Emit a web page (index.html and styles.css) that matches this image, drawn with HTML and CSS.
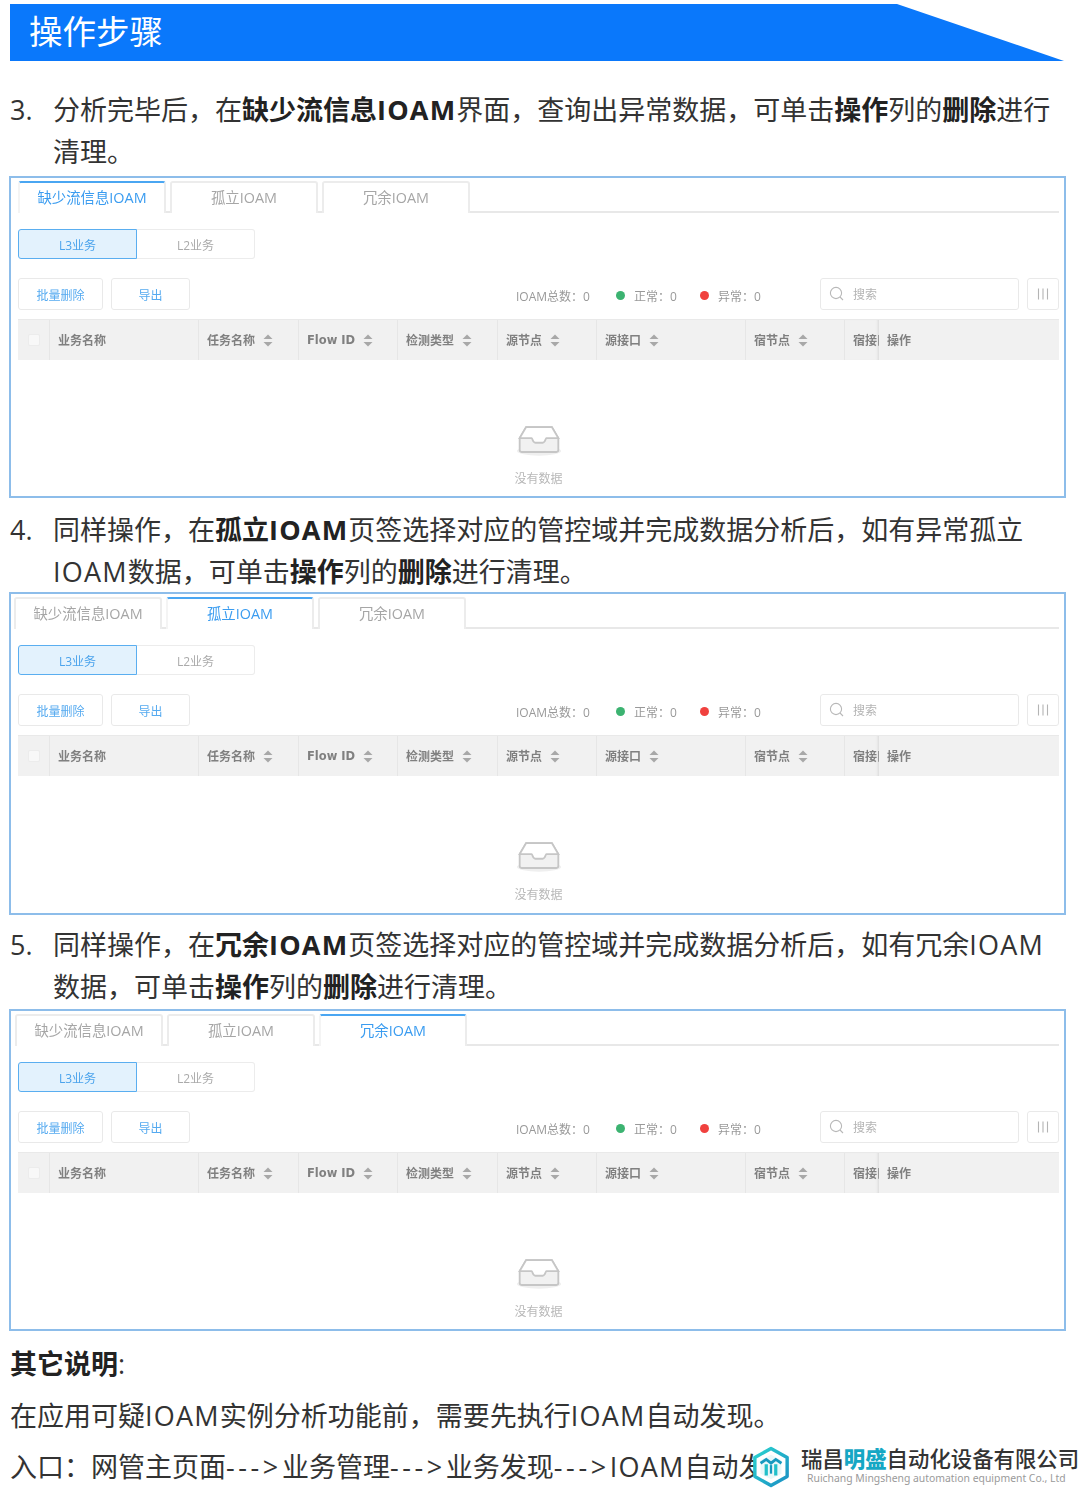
FILE: index.html
```html
<!DOCTYPE html>
<html lang="zh-CN">
<head>
<meta charset="utf-8">
<title>操作步骤</title>
<link rel="stylesheet" href="styles.css">
</head>
<body>
<svg class="defs" width="0" height="0" aria-hidden="true">
  <symbol id="sort" viewBox="0 0 10 13"><path d="M5 0.5 9.5 5H0.5Z" fill="#a8a8a8"/><path d="M5 12.5 0.5 8H9.5Z" fill="#a8a8a8"/></symbol>
  <symbol id="search" viewBox="0 0 16 16"><circle cx="7" cy="7" r="5.6" fill="none" stroke="#b8b8b8" stroke-width="1.1"/><path d="M11 11 14 14" stroke="#b8b8b8" stroke-width="1.1"/></symbol>
  <symbol id="cols" viewBox="0 0 12 12"><path d="M1.5 0.5V11.5M6 0.5V11.5M10.5 0.5V11.5" stroke="#b4b4b4" stroke-width="1.1"/></symbol>
  <symbol id="inbox" viewBox="0 0 50 34">
    <ellipse cx="25" cy="29" rx="24" ry="5" fill="#efefef"/>
    <path d="M4 15 11 3H39L46 15V28A2 2 0 0 1 44 30H6A2 2 0 0 1 4 28Z" fill="#f1f1f1" stroke="#c6c6c6" stroke-width="2"/>
    <path d="M11 3H39L46 15H33C32 15 32 20 29 20H21C18 20 18 15 17 15H4Z" fill="#fff" stroke="#c6c6c6" stroke-width="2"/>
  </symbol>
</svg>

<header class="banner"><h1 class="banner-title">操作步骤</h1></header>

<p class="step step-3"><span class="step-no">3.</span><span class="step-text">分析完毕后&#xFF0C;在<b>缺少流信息<span class="la">IOAM</span></b>界面&#xFF0C;查询出异常数据&#xFF0C;可单击<b>操作</b>列的<b>删除</b>进行<br>清理。</span></p>

<section class="panel panel-a">
  <div class="tabs">
    <div class="tab tab-on">缺少流信息IOAM</div><div class="tab">孤立IOAM</div><div class="tab">冗余IOAM</div>
  </div>
  <div class="seg"><div class="seg-item seg-on">L3业务</div><div class="seg-item">L2业务</div></div>
  <div class="tools">
    <div class="btn btn-wide">批量删除</div><div class="btn btn-narrow">导出</div>
    <div class="stats"><span class="stat-total">IOAM总数&#xFF1A;0</span><span class="stat"><i class="dot dot-ok"></i>正常&#xFF1A;0</span><span class="stat"><i class="dot dot-bad"></i>异常&#xFF1A;0</span></div>
    <div class="search"><svg class="ico-search"><use href="#search"/></svg>搜索</div>
    <div class="colbtn"><svg class="ico-cols"><use href="#cols"/></svg></div>
  </div>
  <div class="thead">
    <div class="th c0"><i class="check"></i></div>
    <div class="th c1">业务名称</div>
    <div class="th c2">任务名称<svg class="ico-sort"><use href="#sort"/></svg></div>
    <div class="th c3"><span class="flow">Flow ID</span><svg class="ico-sort"><use href="#sort"/></svg></div>
    <div class="th c4">检测类型<svg class="ico-sort"><use href="#sort"/></svg></div>
    <div class="th c5">源节点<svg class="ico-sort"><use href="#sort"/></svg></div>
    <div class="th c6">源接口<svg class="ico-sort"><use href="#sort"/></svg></div>
    <div class="th c7">宿节点<svg class="ico-sort"><use href="#sort"/></svg></div>
    <div class="th c8">宿接口</div>
    <div class="th c9">操作</div>
  </div>
  <div class="empty"><svg class="ico-inbox"><use href="#inbox"/></svg><div class="empty-text">没有数据</div></div>
</section>

<p class="step step-4"><span class="step-no">4.</span><span class="step-text">同样操作&#xFF0C;在<b>孤立<span class="la">IOAM</span></b>页签选择对应的管控域并完成数据分析后&#xFF0C;如有异常孤立<br><span class="la">IOAM</span>数据&#xFF0C;可单击<b>操作</b>列的<b>删除</b>进行清理。</span></p>

<section class="panel panel-b">
  <div class="tabs">
    <div class="tab">缺少流信息IOAM</div><div class="tab tab-on">孤立IOAM</div><div class="tab">冗余IOAM</div>
  </div>
  <div class="seg"><div class="seg-item seg-on">L3业务</div><div class="seg-item">L2业务</div></div>
  <div class="tools">
    <div class="btn btn-wide">批量删除</div><div class="btn btn-narrow">导出</div>
    <div class="stats"><span class="stat-total">IOAM总数&#xFF1A;0</span><span class="stat"><i class="dot dot-ok"></i>正常&#xFF1A;0</span><span class="stat"><i class="dot dot-bad"></i>异常&#xFF1A;0</span></div>
    <div class="search"><svg class="ico-search"><use href="#search"/></svg>搜索</div>
    <div class="colbtn"><svg class="ico-cols"><use href="#cols"/></svg></div>
  </div>
  <div class="thead">
    <div class="th c0"><i class="check"></i></div>
    <div class="th c1">业务名称</div>
    <div class="th c2">任务名称<svg class="ico-sort"><use href="#sort"/></svg></div>
    <div class="th c3"><span class="flow">Flow ID</span><svg class="ico-sort"><use href="#sort"/></svg></div>
    <div class="th c4">检测类型<svg class="ico-sort"><use href="#sort"/></svg></div>
    <div class="th c5">源节点<svg class="ico-sort"><use href="#sort"/></svg></div>
    <div class="th c6">源接口<svg class="ico-sort"><use href="#sort"/></svg></div>
    <div class="th c7">宿节点<svg class="ico-sort"><use href="#sort"/></svg></div>
    <div class="th c8">宿接口</div>
    <div class="th c9">操作</div>
  </div>
  <div class="empty"><svg class="ico-inbox"><use href="#inbox"/></svg><div class="empty-text">没有数据</div></div>
</section>

<p class="step step-5"><span class="step-no">5.</span><span class="step-text">同样操作&#xFF0C;在<b>冗余<span class="la">IOAM</span></b>页签选择对应的管控域并完成数据分析后&#xFF0C;如有冗余<span class="la">IOAM</span><br>数据&#xFF0C;可单击<b>操作</b>列的<b>删除</b>进行清理。</span></p>

<section class="panel panel-c">
  <div class="tabs">
    <div class="tab">缺少流信息IOAM</div><div class="tab">孤立IOAM</div><div class="tab tab-on">冗余IOAM</div>
  </div>
  <div class="seg"><div class="seg-item seg-on">L3业务</div><div class="seg-item">L2业务</div></div>
  <div class="tools">
    <div class="btn btn-wide">批量删除</div><div class="btn btn-narrow">导出</div>
    <div class="stats"><span class="stat-total">IOAM总数&#xFF1A;0</span><span class="stat"><i class="dot dot-ok"></i>正常&#xFF1A;0</span><span class="stat"><i class="dot dot-bad"></i>异常&#xFF1A;0</span></div>
    <div class="search"><svg class="ico-search"><use href="#search"/></svg>搜索</div>
    <div class="colbtn"><svg class="ico-cols"><use href="#cols"/></svg></div>
  </div>
  <div class="thead">
    <div class="th c0"><i class="check"></i></div>
    <div class="th c1">业务名称</div>
    <div class="th c2">任务名称<svg class="ico-sort"><use href="#sort"/></svg></div>
    <div class="th c3"><span class="flow">Flow ID</span><svg class="ico-sort"><use href="#sort"/></svg></div>
    <div class="th c4">检测类型<svg class="ico-sort"><use href="#sort"/></svg></div>
    <div class="th c5">源节点<svg class="ico-sort"><use href="#sort"/></svg></div>
    <div class="th c6">源接口<svg class="ico-sort"><use href="#sort"/></svg></div>
    <div class="th c7">宿节点<svg class="ico-sort"><use href="#sort"/></svg></div>
    <div class="th c8">宿接口</div>
    <div class="th c9">操作</div>
  </div>
  <div class="empty"><svg class="ico-inbox"><use href="#inbox"/></svg><div class="empty-text">没有数据</div></div>
</section>

<div class="notes">
  <p class="note"><b>其它说明</b>:</p>
  <p class="note">在应用可疑<span class="la">IOAM</span>实例分析功能前&#xFF0C;需要先执行<span class="la">IOAM</span>自动发现。</p>
  <p class="note note-clip">入口&#xFF1A;网管主页面<span class="arrow">---&gt;</span>业务管理<span class="arrow">---&gt;</span>业务发现<span class="arrow">---&gt;</span><span class="la">IOAM</span>自动发现</p>
</div>

<div class="logo">
  <svg class="logo-mark" viewBox="0 0 40 44" aria-hidden="true">
    <defs><linearGradient id="lg" x1="0" y1="0" x2="1" y2="1"><stop offset="0" stop-color="#2bd3cf"/><stop offset="1" stop-color="#1b8fc4"/></linearGradient></defs>
    <path d="M20 2.5 37 12V32L20 41.5 3 32V12Z" fill="#fff" stroke="url(#lg)" stroke-width="3.6" stroke-linejoin="round"/>
    <path d="M20 9 31 15V29L20 35 9 29V15Z" fill="#e9f8f9"/>
    <path d="M9 18 15 14 20 18 25 14 31 18" fill="none" stroke="#1799bf" stroke-width="3"/>
    <path d="M15 19V31M25 19V31" stroke="#22c0c9" stroke-width="3.4" fill="none"/>
    <path d="M20 20V29" stroke="#1799bf" stroke-width="2.4" fill="none"/>
  </svg>
  <div class="logo-text">
    <div class="logo-cn">瑞昌<span class="logo-hi">明盛</span>自动化设备有限公司</div>
    <div class="logo-en">Ruichang Mingsheng automation equipment Co., Ltd</div>
  </div>
</div>
</body>
</html>
```

FILE: styles.css
```css
* { box-sizing: border-box; }
html, body { margin: 0; padding: 0; }
body {
  position: relative;
  width: 1080px;
  height: 1489px;
  overflow: hidden;
  background: #fff;
  color: #333;
  font-family: "Open Sans", "Noto Sans CJK SC", sans-serif;
}
.defs { position: absolute; }
b { font-weight: 700; color: #222; }
.la { letter-spacing: 1.2px; }
.arrow { letter-spacing: 3.6px; }

.banner {
  margin: 4px 16px 0 10px;
  height: 57px;
  background: #0a78fb;
  clip-path: polygon(0 0, 887px 0, 100% 100%, 0 100%);
  padding-left: 19px;
}
.banner-title {
  margin: 0;
  font-size: 33.5px;
  font-weight: 400;
  line-height: 54px;
  color: #fff;
}

.step {
  display: flex;
  margin: 0;
  padding-left: 10px;
  font-size: 27px;
  line-height: 42px;
  white-space: nowrap;
  color: #333;
}
.step-no { width: 43px; flex: none; }
.step-3 { margin-top: 28px; margin-bottom: 3px; }
.step-4 { margin-top: 11px; margin-bottom: -1px; }
.step-5 { margin-top: 9px; margin-bottom: 1px; }

.panel {
  display: flex;
  flex-direction: column;
  margin-left: 9px;
  width: 1057px;
  height: 322px;
  border: 2px solid #8dbdea;
  padding: 3px 5px 0 7px;
  color: #aaa;
  font-size: 12px;
  overflow: hidden;
  filter: blur(0.35px);
}
.panel-b { height: 323px; }

.tabs {
  display: flex;
  gap: 4px;
  height: 32px;
  border-bottom: 2px solid #e8e8e8;
  flex: none;
}
.tab {
  width: 148px;
  height: 32px;
  border: 2px solid #ececec;
  border-radius: 3px 3px 0 0;
  border-bottom: 0;
  text-align: center;
  line-height: 30px;
  font-size: 14.4px;
  color: #a6a6a6;
  background: #fff;
}
.tab-on {
  border-top: 2px solid #4aa6f2;
  color: #3a9cf0;
  border-left-color: #f4f4f4;
}
.panel-b .tabs { margin-left: -4px; }
.panel-c .tabs { margin-left: -3px; }

.seg {
  display: flex;
  margin-top: 16px;
  width: 237px;
  height: 30px;
  flex: none;
}
.seg-item {
  flex: 1;
  text-align: center;
  line-height: 31px;
  border: 1px solid #ececec;
  border-left: 0;
  border-radius: 0 3px 3px 0;
  color: #aaa;
  font-size: 12px;
}
.seg-on {
  flex: none;
  width: 119px;
  background: #e3f2fd;
  border: 1px solid #5aaef0;
  border-radius: 3px 0 0 3px;
  color: #4aa3ec;
}

.tools {
  display: flex;
  align-items: center;
  margin-top: 19px;
  height: 32px;
  flex: none;
}
.btn {
  height: 32px;
  flex: none;
  border: 1px solid #e9e9e9;
  border-radius: 3px;
  text-align: center;
  line-height: 33px;
  color: #55aaf0;
  font-size: 12px;
  margin-right: 8px;
}
.btn-wide { width: 85px; }
.btn-narrow { width: 79px; }
.stats {
  display: flex;
  align-items: center;
  margin-left: 318px;
  width: 304px;
  flex: none;
  padding-top: 3px;
  font-size: 12px;
  color: #999;
}
.stat-total { width: 100px; }
.stat { display: flex; align-items: center; width: 84px; }
.dot {
  width: 9px;
  height: 9px;
  border-radius: 50%;
  margin-right: 9px;
}
.dot-ok { background: #3cb371; }
.dot-bad { background: #f0413e; }
.search {
  display: flex;
  align-items: center;
  width: 199px;
  flex: none;
  height: 32px;
  border: 1px solid #e9e9e9;
  border-radius: 3px;
  padding-left: 8px;
  color: #b4b4b4;
}
.ico-search { width: 16px; height: 16px; margin-right: 8px; }
.colbtn {
  display: flex;
  align-items: center;
  justify-content: center;
  width: 32px;
  flex: none;
  height: 32px;
  margin-left: 8px;
  border: 1px solid #e9e9e9;
  border-radius: 3px;
}
.ico-cols { width: 12px; height: 12px; }

.thead {
  display: grid;
  grid-template-columns: 31px 149px 100px 99px 100px 99px 149px 99px 35px 180px;
  margin-top: 9px;
  height: 41px;
  background: #f1f1f1;
  border-top: 1px solid #e9e9e9;
  flex: none;
  font-size: 12px;
  font-weight: 700;
  color: #808080;
}
.th {
  display: flex;
  align-items: center;
  padding-left: 8px;
  border-left: 1px solid #e6e6e6;
  white-space: nowrap;
  overflow: hidden;
}
.c0 { padding-left: 10px; border-left: 0; }
.c8 { box-shadow: inset -3px 0 3px -2px #d8d8d8; }
.c9 { border-left: 0; }
.flow { font-family: "DejaVu Sans", sans-serif; font-size: 11.5px; }
.check {
  width: 12px;
  height: 12px;
  background: #f8f8f8;
  border: 1px solid #ececec;
  border-radius: 2px;
}
.ico-sort { width: 10px; height: 13px; margin-left: 8px; flex: none; }

.empty {
  display: flex;
  flex-direction: column;
  align-items: center;
  flex: 1;
  padding-top: 64px;
}
.ico-inbox { width: 46px; height: 32px; }
.empty-text {
  margin-top: 15px;
  color: #b8b8b8;
  font-size: 12px;
  line-height: 16px;
}

.notes { margin-top: 7px; padding-left: 10px; }
.note {
  margin: 0;
  font-size: 27px;
  line-height: 51.5px;
  white-space: nowrap;
  color: #333;
}
.note-clip { width: 745px; overflow: hidden; }

.logo {
  position: absolute;
  left: 752px;
  top: 1444px;
  width: 328px;
  height: 45px;
  display: flex;
  align-items: center;
}
.logo-mark { width: 38px; height: 42px; flex: none; }
.logo-text {
  margin-left: 11px;
  align-self: stretch;
  padding-top: 2px;
}
.logo-cn {
  font-size: 21.4px;
  line-height: 26px;
  font-weight: 500;
  color: #333;
  white-space: nowrap;
}
.logo-hi { color: #16a7c4; font-weight: 900; }
.logo-en {
  margin-left: 6px;
  font-size: 10.4px;
  line-height: 13px;
  color: #9a9a9a;
  white-space: nowrap;
  font-family: "Noto Sans", sans-serif;
}
```
